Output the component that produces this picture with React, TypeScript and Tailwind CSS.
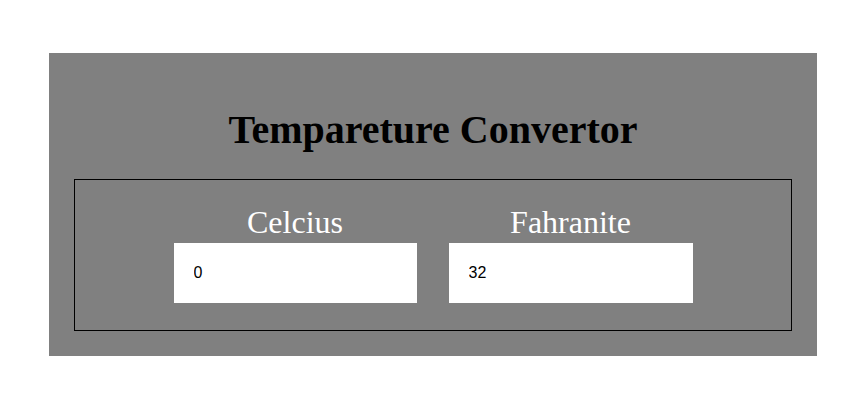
import { useState } from 'react'

export default function App() {
  const [celsius, setCelsius] = useState('0')
  const [fahrenheit, setFahrenheit] = useState('32')

  const onCelsius = (v: string) => {
    setCelsius(v)
    const n = parseFloat(v)
    setFahrenheit(isNaN(n) ? '' : String(Math.round((n * 9) / 5 + 32)))
  }

  const onFahrenheit = (v: string) => {
    setFahrenheit(v)
    const n = parseFloat(v)
    setCelsius(isNaN(n) ? '' : String(Math.round(((n - 32) * 5) / 9)))
  }

  return (
    <div className="min-h-screen bg-white pt-[53px] pl-[49px]">
      <div className="w-[768px] bg-[#808080] px-[25px] pt-[54px] pb-[25px]">
        <h1 className="text-center font-['Liberation_Serif',serif] text-[40px] font-bold leading-[46px] text-black mb-[26px]">
          Tempareture Convertor
        </h1>
        <div className="border border-black pt-[23px] pb-[27px] flex justify-center gap-[32px]">
          <div className="flex flex-col items-center">
            <label className="font-['Liberation_Serif',serif] text-[32px] leading-[38px] text-white mb-[2px]">
              Celcius
            </label>
            <input
              value={celsius}
              onChange={(e) => onCelsius(e.target.value)}
              className="w-[243px] h-[60px] bg-white pl-[20px] font-['Liberation_Sans',sans-serif] text-[16px] text-black outline-none"
            />
          </div>
          <div className="flex flex-col items-center">
            <label className="font-['Liberation_Serif',serif] text-[32px] leading-[38px] text-white mb-[2px]">
              Fahranite
            </label>
            <input
              value={fahrenheit}
              onChange={(e) => onFahrenheit(e.target.value)}
              className="w-[244px] h-[60px] bg-white pl-[20px] font-['Liberation_Sans',sans-serif] text-[16px] text-black outline-none"
            />
          </div>
        </div>
      </div>
    </div>
  )
}
